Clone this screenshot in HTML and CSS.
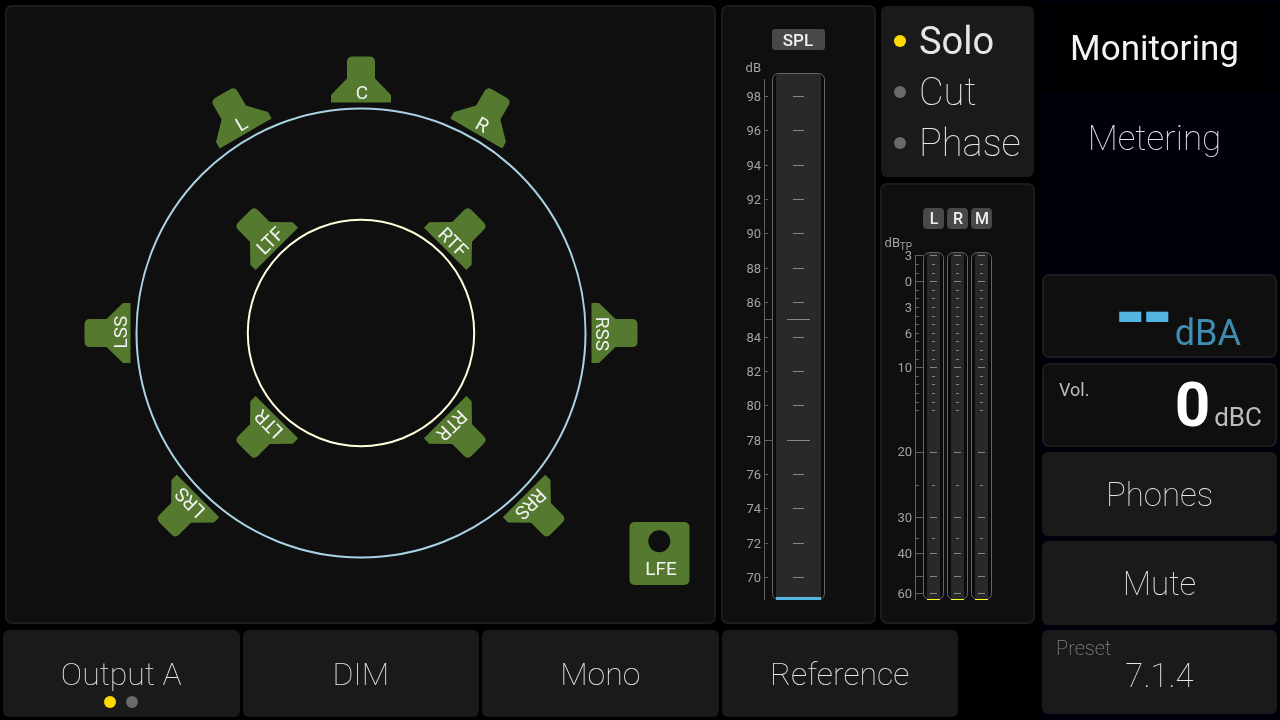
FILE: index.html
```
<!DOCTYPE html>
<html lang="en">
<head>
<meta charset="utf-8">
<title>Monitoring</title>
<link rel="stylesheet" href="styles.css">
</head>
<body>
<div class="app">
  <main class="main">
    <div class="panels">
      <section class="panel stage" aria-label="Speaker layout">
        <svg class="drawing" viewBox="7 7 707 615">
          <defs>
            <path id="speaker" d="M-30 0V-7.500L-14-24V-40.500Q-14-46-8.500-46H8.500Q14-46 14-40.500V-24L30-7.500V0Z"/>
          </defs>
          <circle class="ring ring-outer" cx="361" cy="333" r="224.500"/>
          <circle class="ring ring-inner" cx="361" cy="333" r="113.200"/>
          <g class="speakers">
            <g transform="translate(361 333) rotate(0) translate(0 -230.500)"><use href="#speaker"/><text x="1" y="-4">C</text></g>
            <g transform="translate(361 333) rotate(-30) translate(0 -230.500)"><use href="#speaker"/><text x="1" y="-4">L</text></g>
            <g transform="translate(361 333) rotate(30) translate(0 -230.500)"><use href="#speaker"/><text x="1" y="-4">R</text></g>
            <g transform="translate(361 333) rotate(-90) translate(0 -230.500)"><use href="#speaker"/><text x="1" y="-4">LSS</text></g>
            <g transform="translate(361 333) rotate(90) translate(0 -230.500)"><use href="#speaker"/><text x="1" y="-4">RSS</text></g>
            <g transform="translate(361 333) rotate(-135) translate(0 -230.500)"><use href="#speaker"/><text x="1" y="-4">LRS</text></g>
            <g transform="translate(361 333) rotate(135) translate(0 -230.500)"><use href="#speaker"/><text x="1" y="-4">RRS</text></g>
            <g transform="translate(361 333) rotate(-45) translate(0 -119)"><use href="#speaker"/><text x="1" y="-4">LTF</text></g>
            <g transform="translate(361 333) rotate(45) translate(0 -119)"><use href="#speaker"/><text x="1" y="-4">RTF</text></g>
            <g transform="translate(361 333) rotate(-135) translate(0 -119)"><use href="#speaker"/><text x="1" y="-4">LTR</text></g>
            <g transform="translate(361 333) rotate(135) translate(0 -119)"><use href="#speaker"/><text x="1" y="-4">RTR</text></g>
            <g>
              <rect x="629.500" y="522" width="60" height="63" rx="5"/>
              <circle class="cone" cx="659.300" cy="541.200" r="11"/>
              <text x="661" y="575">LFE</text>
            </g>
          </g>
        </svg>
      </section>

      <section class="panel spl" aria-label="SPL meter">
        <svg class="drawing" viewBox="723 7 151 615">
          <rect class="chip" x="772" y="29" width="53" height="21" rx="3"/>
          <text class="chip-text chip-wide" x="798" y="46">SPL</text>
          <text class="scale" x="761" y="72">dB</text>
          <rect class="tube" x="772.500" y="73.500" width="52" height="526" rx="6"/>
          <rect class="track" x="776" y="74" width="45" height="523"/>
          <path class="axis" d="M764.500 79V600M765 96.500h3M765 130.500h3M765 165.500h3M765 199.500h3M765 233.500h3M765 268.500h3M765 302.500h3M765 319.500h7M765 337.500h3M765 371.500h3M765 405.500h3M765 440.500h7M765 474.500h3M765 508.500h3M765 543.500h3M765 577.500h3"/>
          <path class="ticks" d="M793 96.500h11M793 130.500h11M793 165.500h11M793 199.500h11M793 233.500h11M793 268.500h11M793 302.500h11M787 319.500h23M793 337.500h11M793 371.500h11M793 405.500h11M787 440.500h23M793 474.500h11M793 508.500h11M793 543.500h11M793 577.500h11"/>
          <rect class="level-blue" x="776" y="597" width="45" height="3"/>
          <g class="scale">
            <text x="761" y="101">98</text><text x="761" y="135">96</text><text x="761" y="170">94</text>
            <text x="761" y="204">92</text><text x="761" y="238">90</text><text x="761" y="273">88</text>
            <text x="761" y="307">86</text><text x="761" y="342">84</text><text x="761" y="376">82</text>
            <text x="761" y="410">80</text><text x="761" y="445">78</text><text x="761" y="479">76</text>
            <text x="761" y="513">74</text><text x="761" y="548">72</text><text x="761" y="582">70</text>
          </g>
        </svg>
      </section>

      <div class="right-col">
        <fieldset class="modes" aria-label="Speaker key mode">
          <label class="mode"><input class="dot" type="radio" name="mode" checked><span class="mode-name">Solo</span></label>
          <label class="mode"><input class="dot" type="radio" name="mode"><span class="mode-name">Cut</span></label>
          <label class="mode"><input class="dot" type="radio" name="mode"><span class="mode-name">Phase</span></label>
        </fieldset>
        <section class="panel peaks" aria-label="True peak meters">
          <svg class="drawing" viewBox="882 185 151 437">
            <defs>
              <g id="meter">
                <rect class="tube" x="0.500" y="252.500" width="20" height="347" rx="6"/>
                <rect class="track" x="4" y="253" width="13" height="346"/>
                <path class="ticks" d="M7 255.500h7M7 281.500h7M7 367.500h7M7 452.500h7M7 517.500h7M7 553.500h7M7 576.500h7M7 593.500h7M9 264.500h3M9 273.500h3M9 290.500h3M9 298.500h3M9 307.500h3M9 316.500h3M9 324.500h3M9 333.500h3M9 341.500h3M9 350.500h3M9 359.500h3M9 376.500h3M9 384.500h3M9 393.500h3M9 402.500h3M9 410.500h3M9 485.500h3M9 538.500h3"/>
                <rect class="level-yellow" x="4" y="599" width="13" height="1"/>
              </g>
            </defs>
            <rect class="chip" x="923" y="208" width="21" height="21" rx="4"/>
            <rect class="chip" x="947" y="208" width="21" height="21" rx="4"/>
            <rect class="chip" x="971" y="208" width="21" height="21" rx="4"/>
            <text class="chip-text" x="934" y="224">L</text>
            <text class="chip-text" x="958" y="224">R</text>
            <text class="chip-text" x="982" y="224">M</text>
            <use href="#meter" x="923"/>
            <use href="#meter" x="947"/>
            <use href="#meter" x="971"/>
            <path class="axis" d="M915.500 255V600M916 255.500h7M916 281.500h7M916 367.500h7M916 452.500h7M916 517.500h7M916 553.500h7M916 576.500h7M916 593.500h7M916 264.500h3M916 273.500h3M916 290.500h3M916 298.500h3M916 307.500h3M916 316.500h3M916 324.500h3M916 333.500h3M916 341.500h3M916 350.500h3M916 359.500h3M916 376.500h3M916 384.500h3M916 393.500h3M916 402.500h3M916 410.500h3M916 485.500h3M916 538.500h3"/>
            <g class="scale">
              <text x="900" y="247">dB</text><text class="sub" x="912" y="250">TP</text>
              <text x="912" y="260">3</text><text x="912" y="286">0</text><text x="912" y="312">3</text>
              <text x="912" y="338">6</text><text x="912" y="372">10</text><text x="912" y="456">20</text>
              <text x="912" y="522">30</text><text x="912" y="558">40</text><text x="912" y="598">60</text>
            </g>
          </svg>
        </section>
      </div>
    </div>

    <div class="bottom">
      <button class="key" type="button">Output A
        <span class="pager"><span class="dot dot-on"></span><span class="dot"></span></span>
      </button>
      <button class="key" type="button">DIM</button>
      <button class="key" type="button">Mono</button>
      <button class="key" type="button">Reference</button>
    </div>
  </main>

  <aside class="side">
    <nav class="tabs">
      <button class="tab tab-active" type="button">Monitoring</button>
      <button class="tab" type="button">Metering</button>
    </nav>
    <div class="side-keys">
      <div class="readout readout-spl"><span class="value">--</span><span class="unit">dBA</span></div>
      <div class="readout readout-vol"><span class="caption">Vol.</span><span class="value">0</span><span class="unit">dBC</span></div>
      <button class="key" type="button">Phones</button>
      <button class="key" type="button">Mute</button>
      <button class="key preset" type="button"><span class="preset-label">Preset</span>7.1.4</button>
    </div>
  </aside>
</div>
</body>
</html>
```
FILE: styles.css
```
* {
  box-sizing: border-box;
}

body {
  margin: 0;
  background: #000002;
  color: #e6e6e6;
  font-family: Roboto, "Liberation Sans", sans-serif;
}

button {
  margin: 0;
  padding: 0;
  border: 0;
  background: none;
  color: inherit;
  font: inherit;
}

.app {
  display: grid;
  grid-template-columns: minmax(0, 1fr) 240px;
  height: 100vh;
  will-change: transform;
}

.main {
  display: flex;
  flex-direction: column;
  gap: 6px;
  min-height: 0;
  padding: 5px 5px 3px 3px;
}

.panels {
  flex: 1;
  display: grid;
  grid-template-columns: minmax(0, 1fr) 155px 155px;
  gap: 4px;
  min-height: 0;
  padding-left: 2px;
}

.panel {
  min-height: 0;
  border: 2px solid #1c1c1c;
  border-radius: 7px;
  background: #0f0f0f;
}

.stage {
  margin-right: 1px;
}

.drawing {
  display: block;
  width: 100%;
  height: 100%;
}

.ring {
  fill: none;
  stroke-width: 2;
}

.ring-outer {
  stroke: #a9d3e4;
}

.ring-inner {
  stroke: #ffffdc;
}

.speakers {
  fill: #557a2f;
}

.speakers text {
  fill: #f2f2f2;
  font-size: 19px;
  text-anchor: middle;
}

.cone {
  fill: #0f0f0f;
}

.chip {
  fill: #484848;
}

.chip-text {
  fill: #f0f0f0;
  font-size: 16px;
  font-weight: 500;
  text-anchor: middle;
}

.chip-wide {
  font-size: 17px;
}

.scale {
  fill: #a2a2a2;
  font-size: 13px;
  text-anchor: end;
}

.sub {
  font-size: 10px;
}

.tube {
  fill: #0b0b0b;
  stroke: #666;
}

.track {
  fill: #292929;
}

.axis {
  fill: none;
  stroke: #616161;
}

.ticks {
  fill: none;
  stroke: #858585;
}

.level-blue {
  fill: #54b6e0;
}

.level-yellow {
  fill: #ffff20;
}

.right-col {
  display: flex;
  flex-direction: column;
  gap: 5px;
  min-height: 0;
}

.peaks {
  flex: 1;
}

.modes {
  display: flex;
  flex-direction: column;
  margin: 1px;
  padding: 9px 0 9px 13px;
  border: 0;
  border-radius: 6px;
  background: #1a1a1a;
}

.mode {
  display: flex;
  align-items: center;
  gap: 13px;
  height: 51px;
  font-size: 38px;
  font-weight: 100;
}

.mode:has(:checked) {
  font-weight: 450;
}

.dot {
  appearance: none;
  flex: none;
  width: 12px;
  height: 12px;
  margin: 0;
  border-radius: 50%;
  background: #6a6a6a;
}

.dot:checked,
.dot-on {
  background: #ffd900;
}

.bottom {
  display: grid;
  grid-template-columns: repeat(4, minmax(0, 1fr));
  gap: 3px;
  height: 87px;
  padding-right: 77px;
}

.key {
  position: relative;
  border-radius: 6px;
  background: #1a1a1a;
  font-size: 32px;
  font-weight: 100;
}

.pager {
  position: absolute;
  right: 0;
  bottom: 9px;
  left: 0;
  display: flex;
  justify-content: center;
  gap: 10px;
}

.side {
  display: flex;
  flex-direction: column;
  justify-content: space-between;
  padding: 3px 3px 6px 2px;
  background: #00000b;
}

.tabs {
  display: flex;
  flex-direction: column;
}

.tab {
  height: 90px;
  padding-right: 10px;
  border-radius: 6px;
  font-size: 35px;
  font-weight: 100;
}

.tab-active {
  background: #000002;
  color: #f4f4f4;
  font-weight: 450;
}

.side-keys {
  display: grid;
  grid-auto-rows: 84px;
  gap: 5px;
}

.side-keys .key {
  font-size: 33px;
}

.readout {
  display: flex;
  align-items: baseline;
  justify-content: flex-end;
  gap: 4px;
  border: 2px solid #1c1c1c;
  border-radius: 7px;
  background: #0f0f0f;
}

.value {
  font-weight: 700;
}

.readout-spl {
  align-items: center;
  padding-right: 34px;
  color: #54b6e0;
  line-height: 1;
}

.readout-spl .value {
  padding-bottom: 16px;
  font-family: "Open Sans", sans-serif;
  font-size: 84px;
}

.readout-spl .unit {
  padding-top: 34px;
  color: #3f8db0;
  font-size: 36px;
}

.readout-vol {
  padding: 0 13px 0 15px;
  color: #fff;
  font-size: 62px;
  line-height: 80px;
}

.readout-vol .unit {
  color: #bdbdbd;
  font-size: 26px;
}

.caption {
  align-self: flex-start;
  margin-right: auto;
  padding-top: 15px;
  color: #bdbdbd;
  font-size: 18px;
  line-height: 20px;
}

.side-keys .preset {
  padding-top: 6px;
}

.side-keys .preset-label {
  position: absolute;
  top: 6px;
  left: 14px;
  color: #858585;
  font-size: 20px;
  font-weight: 200;
}
```
